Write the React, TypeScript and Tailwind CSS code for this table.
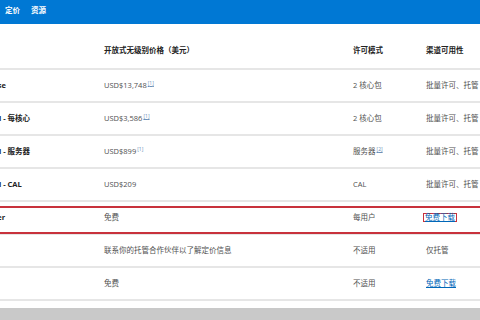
import React from "react";

const FONT = "font-['Open_Sans','Noto_Sans_CJK_SC',sans-serif]";

type Row = {
  name: string;
  price: React.ReactNode;
  model: React.ReactNode;
  channel: React.ReactNode;
  highlight?: boolean;
};

const Sup = ({ n, u = true }: { n: string; u?: boolean }) => (
  <sup className={`text-[5px] text-[#6a8fb8] ml-[1px] top-[-3px] ${u ? "underline" : ""}`}>[{n}]</sup>
);

const rows: Row[] = [
  { name: "Enterprise", price: <>USD$13,748<Sup n="1" /></>, model: "2 核心包", channel: "批量许可、托管" },
  { name: "Standard - 每核心", price: <>USD$3,586<Sup n="1" /></>, model: "2 核心包", channel: "批量许可、托管" },
  { name: "Standard - 服务器", price: <>USD$899<Sup n="1" u={false} /></>, model: <>服务器<Sup n="2" /></>, channel: "批量许可、托管" },
  { name: "Standard - CAL", price: "USD$209", model: "CAL", channel: "批量许可、托管" },
  {
    name: "Developer",
    price: "免费",
    model: "每用户",
    channel: (
      <span className="inline-block ml-[-3px] border-[1.5px] border-[#c8323c] px-[1px] leading-[7px] text-[#0067b8] underline">
        免费下载
      </span>
    ),
    highlight: true,
  },
  { name: "Web", price: "联系你的托管合作伙伴以了解定价信息", model: "不适用", channel: "仅托管" },
  {
    name: "Express",
    price: "免费",
    model: "不适用",
    channel: <span className="text-[#0067b8] underline">免费下载</span>,
  },
];

export default function App() {
  return (
    <div className={`w-[480px] h-[320px] overflow-hidden bg-white flex flex-col ${FONT} text-[7.5px]`}>
      <div className="h-[24px] shrink-0 bg-[#0078d4] flex items-start pt-[6px] pl-[5px] gap-[11px] text-white font-bold leading-[8px]">
        <span>定价</span>
        <span>资源</span>
      </div>
      <div className="ml-[-40px] flex flex-col">
        <div className="h-[46px] flex items-end pb-[12px] border-b-2 border-[#e6e6e6] font-bold text-[#222]">
          <div className="w-[144px] shrink-0"></div>
          <div className="w-[249px] shrink-0">开放式无级别价格（美元）</div>
          <div className="w-[73px] shrink-0">许可模式</div>
          <div className="flex-1">渠道可用性</div>
        </div>
        {rows.map((r) => (
          <div
            key={r.name}
            className="relative h-[33px] flex items-center border-b-2 border-[#e6e6e6] text-[#505050]"
          >
            <div className="w-[144px] shrink-0 pl-[7px] font-bold text-[#222] whitespace-nowrap">{r.name}</div>
            <div className="w-[249px] shrink-0 whitespace-nowrap">{r.price}</div>
            <div className="w-[73px] shrink-0 whitespace-nowrap">{r.model}</div>
            <div className="flex-1 whitespace-nowrap">{r.channel}</div>
            {r.highlight && (
              <div className="absolute left-0 right-[-10px] top-[4px] bottom-[-1px] border-2 border-[#c8323c] pointer-events-none"></div>
            )}
          </div>
        ))}
      </div>
      <div className="mt-auto h-[12px] shrink-0 bg-[#c9c9c9]"></div>
    </div>
  );
}
